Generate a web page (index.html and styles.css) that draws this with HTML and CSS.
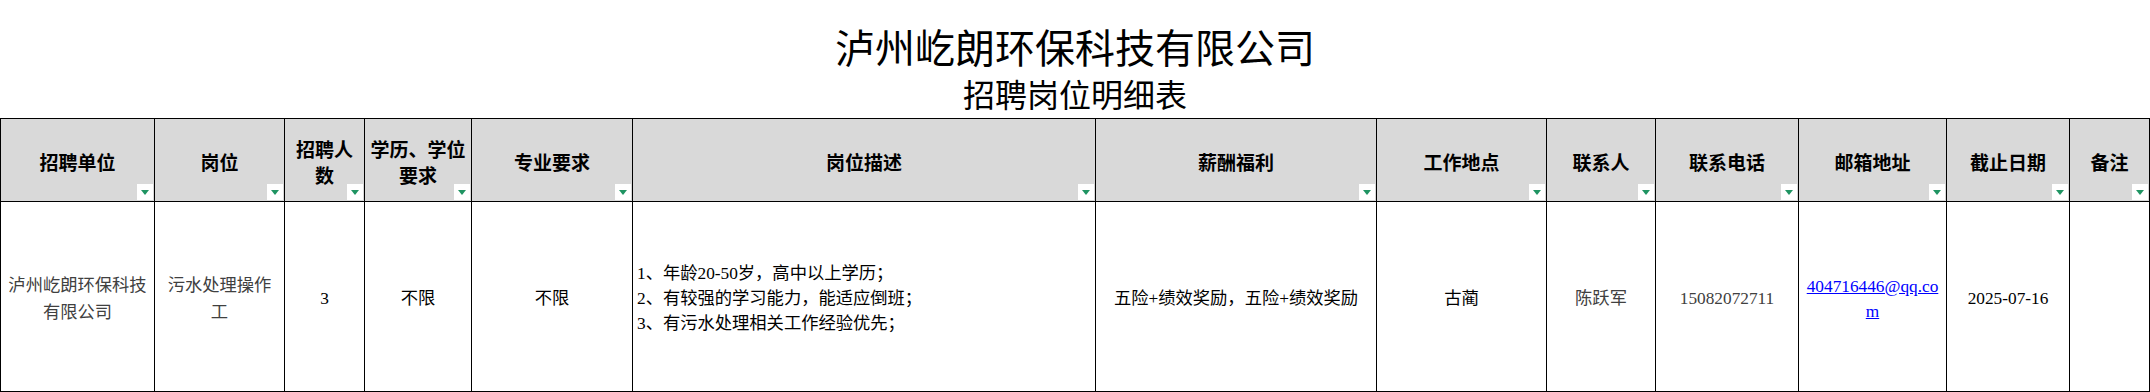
FILE: index.html
```html
<!DOCTYPE html>
<html lang="zh-CN">
<head>
<meta charset="utf-8">
<title>泸州屹朗环保科技有限公司 招聘岗位明细表</title>
<link rel="stylesheet" href="styles.css">
</head>
<body>
<div class="sheet">
  <h1 class="title">泸州屹朗环保科技有限公司</h1>
  <h2 class="subtitle">招聘岗位明细表</h2>
  <div class="grid">
    <div class="th"><div class="txt">招聘单位</div><span class="filter"></span></div>
    <div class="th"><div class="txt">岗位</div><span class="filter"></span></div>
    <div class="th"><div class="txt">招聘人数</div><span class="filter"></span></div>
    <div class="th"><div class="txt">学历、学位要求</div><span class="filter"></span></div>
    <div class="th"><div class="txt">专业要求</div><span class="filter"></span></div>
    <div class="th"><div class="txt">岗位描述</div><span class="filter"></span></div>
    <div class="th"><div class="txt">薪酬福利</div><span class="filter"></span></div>
    <div class="th"><div class="txt">工作地点</div><span class="filter"></span></div>
    <div class="th"><div class="txt">联系人</div><span class="filter"></span></div>
    <div class="th"><div class="txt">联系电话</div><span class="filter"></span></div>
    <div class="th"><div class="txt">邮箱地址</div><span class="filter"></span></div>
    <div class="th"><div class="txt">截止日期</div><span class="filter"></span></div>
    <div class="th"><div class="txt">备注</div><span class="filter"></span></div>

    <div class="td gray tall"><div class="txt">泸州屹朗环保科技有限公司</div></div>
    <div class="td gray tall"><div class="txt">污水处理操作工</div></div>
    <div class="td"><div class="txt">3</div></div>
    <div class="td"><div class="txt">不限</div></div>
    <div class="td"><div class="txt">不限</div></div>
    <div class="td left"><div class="txt">1、年龄20-50岁，高中以上学历；<br>2、有较强的学习能力，能适应倒班；<br>3、有污水处理相关工作经验优先；</div></div>
    <div class="td"><div class="txt">五险+绩效奖励，五险+绩效奖励</div></div>
    <div class="td"><div class="txt">古蔺</div></div>
    <div class="td gray"><div class="txt">陈跃军</div></div>
    <div class="td gray"><div class="txt">15082072711</div></div>
    <div class="td mailcell"><div class="txt"><a class="mail" href="mailto:404716446@qq.com">404716446@qq.com</a></div></div>
    <div class="td"><div class="txt">2025-07-16</div></div>
    <div class="td"><div class="txt"></div></div>
  </div>
</div>
</body>
</html>
```

FILE: styles.css
```css
html, body {
  margin: 0;
  padding: 0;
  background: #ffffff;
}

.sheet {
  width: 2150px;
  color: #000;
}

.title {
  margin: 0;
  padding-top: 30px;
  font-family: "Liberation Serif", "Noto Sans CJK SC", sans-serif;
  font-weight: 400;
  font-size: 40px;
  line-height: 40px;
  text-align: center;
}

.subtitle {
  margin: 10px 0 0;
  font-family: "Liberation Serif", "Noto Sans CJK SC", sans-serif;
  font-weight: 400;
  font-size: 32px;
  line-height: 32px;
  text-align: center;
}

.grid {
  margin-top: 6px;
  display: grid;
  grid-template-columns: 154px 130px 80px 107px 161px 463px 281px 170px 109px 143px 148px 123px 80px;
  grid-template-rows: 83px 190px;
  width: max-content;
  border-left: 1px solid #000;
  border-top: 1px solid #000;
}

.th, .td {
  box-sizing: border-box;
  border-right: 1px solid #000;
  border-bottom: 1px solid #000;
  display: flex;
  align-items: center;
  justify-content: center;
  text-align: center;
  padding: 4px 4px 0;
  min-width: 0;
}

.th {
  position: relative;
  background: #d9d9d9;
  font-family: "Noto Sans CJK SC", sans-serif;
  font-weight: 700;
  font-size: 19px;
  line-height: 26px;
}

.filter {
  position: absolute;
  right: 1px;
  bottom: 1px;
  width: 16px;
  height: 16px;
  background: #ffffff;
  display: flex;
  align-items: center;
  justify-content: center;
}

.filter::after {
  content: "";
  display: block;
  width: 0;
  height: 0;
  border-left: 4px solid transparent;
  border-right: 4px solid transparent;
  border-top: 5px solid #1f9462;
}

.td {
  font-family: "Liberation Serif", "Noto Sans CJK SC", serif;
  font-size: 17.3px;
  line-height: 25px;
  padding: 4px 5px 0;
}

.td.tall {
  line-height: 27px;
}

.td.gray {
  color: #404040;
}

.td.left {
  justify-content: flex-start;
  text-align: left;
  padding-left: 4px;
}

.mailcell .txt {
  word-break: break-all;
}

.mail {
  color: #0000ff;
  text-decoration: underline;
}
```
